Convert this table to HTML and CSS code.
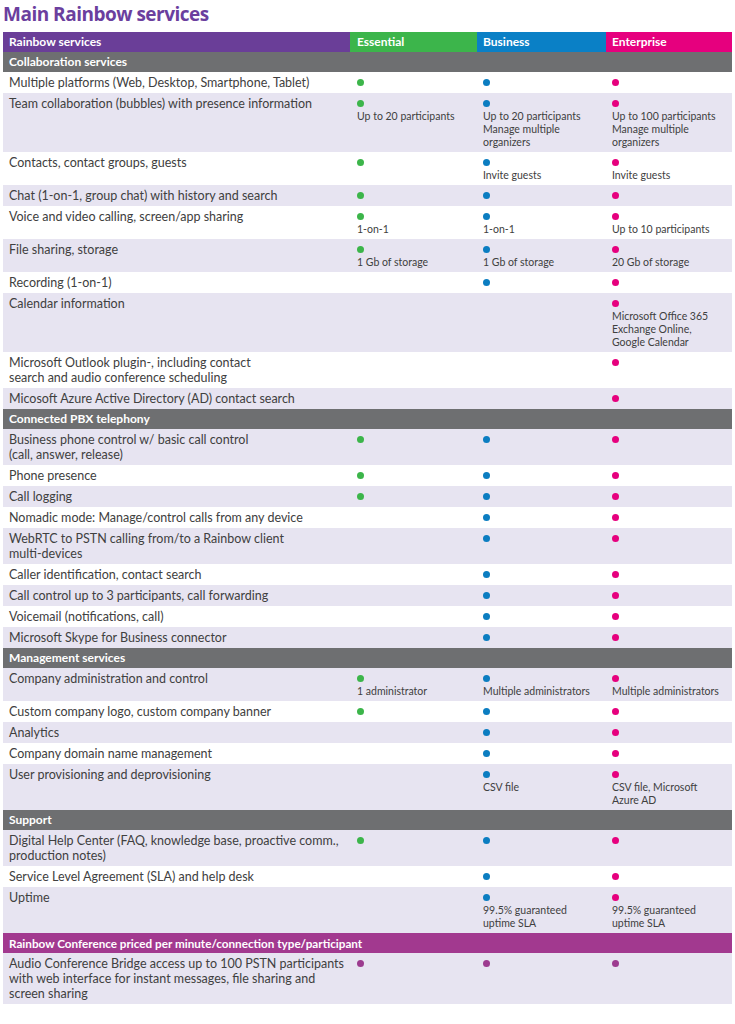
FILE: index.html
```html
<!DOCTYPE html>
<html lang="en">
<head>
<meta charset="utf-8">
<title>Main Rainbow services</title>
<link rel="stylesheet" href="styles.css">
</head>
<body>
<h1 class="title">Main Rainbow services</h1>
<table class="svc">
  <colgroup>
    <col class="c-main"><col class="c-ess"><col class="c-bus"><col class="c-ent">
  </colgroup>
  <thead>
    <tr class="head">
      <th class="h-main">Rainbow services</th>
      <th class="h-ess">Essential</th>
      <th class="h-bus">Business</th>
      <th class="h-ent">Enterprise</th>
    </tr>
  </thead>
  <tbody>
    <tr class="sec"><td colspan="4">Collaboration services</td></tr>
    <tr class="w"><td>Multiple platforms (Web, Desktop, Smartphone, Tablet)</td><td><i class="dot g"></i></td><td><i class="dot b"></i></td><td><i class="dot p"></i></td></tr>
    <tr class="l"><td>Team collaboration (bubbles) with presence information</td><td><i class="dot g"></i><span class="sub">Up to 20 participants</span></td><td><i class="dot b"></i><span class="sub">Up to 20 participants Manage multiple organizers</span></td><td><i class="dot p"></i><span class="sub">Up to 100 participants Manage multiple organizers</span></td></tr>
    <tr class="w"><td>Contacts, contact groups, guests</td><td><i class="dot g"></i></td><td><i class="dot b"></i><span class="sub">Invite guests</span></td><td><i class="dot p"></i><span class="sub">Invite guests</span></td></tr>
    <tr class="l"><td>Chat (1-on-1, group chat) with history and search</td><td><i class="dot g"></i></td><td><i class="dot b"></i></td><td><i class="dot p"></i></td></tr>
    <tr class="w"><td>Voice and video calling, screen/app sharing</td><td><i class="dot g"></i><span class="sub">1-on-1</span></td><td><i class="dot b"></i><span class="sub">1-on-1</span></td><td><i class="dot p"></i><span class="sub">Up to 10 participants</span></td></tr>
    <tr class="l"><td>File sharing, storage</td><td><i class="dot g"></i><span class="sub">1 Gb of storage</span></td><td><i class="dot b"></i><span class="sub">1 Gb of storage</span></td><td><i class="dot p"></i><span class="sub">20 Gb of storage</span></td></tr>
    <tr class="w"><td>Recording (1-on-1)</td><td></td><td><i class="dot b"></i></td><td><i class="dot p"></i></td></tr>
    <tr class="l"><td>Calendar information</td><td></td><td></td><td><i class="dot p"></i><span class="sub">Microsoft Office 365 Exchange Online, Google Calendar</span></td></tr>
    <tr class="w"><td>Microsoft Outlook plugin-, including contact<br>search and audio conference scheduling</td><td></td><td></td><td><i class="dot p"></i></td></tr>
    <tr class="l"><td>Micosoft Azure Active Directory (AD) contact search</td><td></td><td></td><td><i class="dot p"></i></td></tr>
    <tr class="sec"><td colspan="4">Connected PBX telephony</td></tr>
    <tr class="l"><td>Business phone control w/ basic call control<br>(call, answer, release)</td><td><i class="dot g"></i></td><td><i class="dot b"></i></td><td><i class="dot p"></i></td></tr>
    <tr class="w"><td>Phone presence</td><td><i class="dot g"></i></td><td><i class="dot b"></i></td><td><i class="dot p"></i></td></tr>
    <tr class="l"><td>Call logging</td><td><i class="dot g"></i></td><td><i class="dot b"></i></td><td><i class="dot p"></i></td></tr>
    <tr class="w"><td>Nomadic mode: Manage/control calls from any device</td><td></td><td><i class="dot b"></i></td><td><i class="dot p"></i></td></tr>
    <tr class="l"><td>WebRTC to PSTN calling from/to a Rainbow client<br>multi-devices</td><td></td><td><i class="dot b"></i></td><td><i class="dot p"></i></td></tr>
    <tr class="w"><td>Caller identification, contact search</td><td></td><td><i class="dot b"></i></td><td><i class="dot p"></i></td></tr>
    <tr class="l"><td>Call control up to 3 participants, call forwarding</td><td></td><td><i class="dot b"></i></td><td><i class="dot p"></i></td></tr>
    <tr class="w"><td>Voicemail (notifications, call)</td><td></td><td><i class="dot b"></i></td><td><i class="dot p"></i></td></tr>
    <tr class="l"><td>Microsoft Skype for Business connector</td><td></td><td><i class="dot b"></i></td><td><i class="dot p"></i></td></tr>
    <tr class="sec"><td colspan="4">Management services</td></tr>
    <tr class="l"><td>Company administration and control</td><td><i class="dot g"></i><span class="sub">1 administrator</span></td><td><i class="dot b"></i><span class="sub">Multiple administrators</span></td><td><i class="dot p"></i><span class="sub">Multiple administrators</span></td></tr>
    <tr class="w"><td>Custom company logo, custom company banner</td><td><i class="dot g"></i></td><td><i class="dot b"></i></td><td><i class="dot p"></i></td></tr>
    <tr class="l"><td>Analytics</td><td></td><td><i class="dot b"></i></td><td><i class="dot p"></i></td></tr>
    <tr class="w"><td>Company domain name management</td><td></td><td><i class="dot b"></i></td><td><i class="dot p"></i></td></tr>
    <tr class="l"><td>User provisioning and deprovisioning</td><td></td><td><i class="dot b"></i><span class="sub">CSV file</span></td><td><i class="dot p"></i><span class="sub">CSV file, Microsoft Azure AD</span></td></tr>
    <tr class="sec"><td colspan="4">Support</td></tr>
    <tr class="l"><td>Digital Help Center (FAQ, knowledge base, proactive comm.,<br>production notes)</td><td><i class="dot g"></i></td><td><i class="dot b"></i></td><td><i class="dot p"></i></td></tr>
    <tr class="w"><td>Service Level Agreement (SLA) and help desk</td><td></td><td><i class="dot b"></i></td><td><i class="dot p"></i></td></tr>
    <tr class="l"><td>Uptime</td><td></td><td><i class="dot b"></i><span class="sub">99.5% guaranteed uptime SLA</span></td><td><i class="dot p"></i><span class="sub">99.5% guaranteed uptime SLA</span></td></tr>
    <tr class="sec conf"><td colspan="4">Rainbow Conference priced per minute/connection type/participant</td></tr>
    <tr class="l"><td>Audio Conference Bridge access up to 100 PSTN participants<br>with web interface for instant messages, file sharing and<br>screen sharing</td><td><i class="dot v"></i></td><td><i class="dot v"></i></td><td><i class="dot v"></i></td></tr>
  </tbody>
</table>
</body>
</html>
```

FILE: styles.css
```css
* { box-sizing: border-box; }
body {
  margin: 0;
  padding: 0 3px;
  background: #fff;
  font-family: Lato, "Open Sans", sans-serif;
  color: #404040;
}
.title {
  margin: 0;
  padding: 2px 0 0 0;
  height: 32px;
  font-family: "Open Sans", sans-serif;
  font-size: 19px;
  font-weight: 700;
  color: #6b3f9e;
  letter-spacing: -0.5px;
  line-height: 24px;
}
.svc {
  width: 729px;
  border-collapse: collapse;
  table-layout: fixed;
}
.c-main { width: 347px; }
.c-ess { width: 127px; }
.c-bus { width: 129px; }
.c-ent { width: 126px; }
.svc th {
  height: 20px;
  padding: 0 6px 0 6px;
  text-align: left;
  font-family: Lato, "Open Sans", sans-serif;
  font-weight: 700;
  font-size: 12px;
  color: #fff;
  line-height: 20px;
}
.h-main { background: #6a3e98; }
.h-ess { background: #3cb54b; padding-left: 7px !important; }
.h-bus { background: #0a80c6; }
.h-ent { background: #e6007e; }
.sec td {
  height: 20px;
  background: #6e6f71;
  color: #fff;
  font-family: Lato, "Open Sans", sans-serif;
  font-weight: 700;
  font-size: 12px;
  line-height: 20px;
  padding: 0 6px;
  white-space: nowrap;
}
.sec.conf td { background: #a2398f; font-size: 11.7px; }
.svc tbody tr.w td, .svc tbody tr.l td {
  vertical-align: top;
  padding: 3px 6px 3px 6px;
  font-size: 12.5px;
  line-height: 15px;
}
.svc tbody tr.w td:nth-child(2), .svc tbody tr.l td:nth-child(2) { padding-left: 7px; }
.w td { background: #fff; }
.l td { background: #e7e4f1; }
.dot {
  display: block;
  width: 7px;
  height: 7px;
  border-radius: 50%;
  margin: 4px 0 3px 0;
}
.dot.g { background: #3cb54a; }
.dot.b { background: #0b7dc1; }
.dot.p { background: #e6007e; }
.dot.v { background: #9c3b8f; }
.sub {
  display: block;
  font-size: 10.5px;
  line-height: 13px;
}
```
